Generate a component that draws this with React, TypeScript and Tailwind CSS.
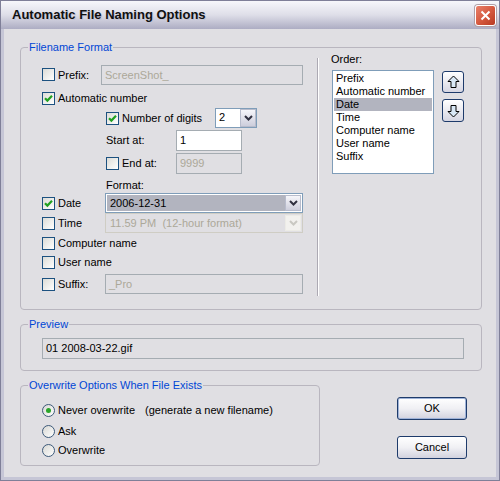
import React from "react";

function Check({ checked, className = "" }: { checked?: boolean; className?: string }) {
  return (
    <div
      className={`w-[13px] h-[13px] shrink-0 border border-[#1c5180] bg-linear-to-br from-[#dcdcd7] to-white flex items-center justify-center ${className}`}
    >
      {checked && (
        <svg width="9" height="9" viewBox="0 0 9 9">
          <path d="M1 4.2 L3.4 6.6 L8 1.8" stroke="#21a121" strokeWidth="2.2" fill="none" />
        </svg>
      )}
    </div>
  );
}

function Radio({ checked }: { checked?: boolean }) {
  return (
    <div className="w-[13px] h-[13px] shrink-0 rounded-full border border-[#3d5a7a] bg-linear-to-br from-[#d8d8d4] to-white flex items-center justify-center">
      {checked && <div className="w-[5px] h-[5px] rounded-full bg-[#2aa52a]" />}
    </div>
  );
}

function Edit({
  value,
  disabled,
  className = "",
}: {
  value: string;
  disabled?: boolean;
  className?: string;
}) {
  return (
    <div
      className={`border border-[#a5acb2] flex items-center pl-[3px] shrink-0 ${
        disabled ? "bg-[#e0dfe3] text-[#aca899]" : "bg-white text-black"
      } ${className}`}
    >
      {value}
    </div>
  );
}

function DropBtn({ disabled }: { disabled?: boolean }) {
  return (
    <div
      className={`w-[16px] h-full shrink-0 border flex items-center justify-center ${
        disabled
          ? "border-[#ecebe6] bg-[#f2f1ee]"
          : "border-[#b8bccc] bg-linear-to-b from-[#f6f6fa] to-[#cdcedc]"
      }`}
    >
      <svg width="9" height="6" viewBox="0 0 9 6">
        <path
          d="M1 1 L4.5 4.5 L8 1"
          stroke={disabled ? "#c9c8c2" : "#303040"}
          strokeWidth="2"
          fill="none"
        />
      </svg>
    </div>
  );
}

function Group({
  title,
  className = "",
  children,
}: {
  title: string;
  className?: string;
  children?: React.ReactNode;
}) {
  return (
    <div className={`relative border border-[#b9b6bf] rounded-[4px] shrink-0 ${className}`}>
      <span className="absolute left-[7px] top-[-8px] px-[1px] bg-[#e0dfe3] text-[#0046d5] leading-[14px] whitespace-nowrap">
        {title}
      </span>
      {children}
    </div>
  );
}

function ArrowBtn({ up, className = "" }: { up?: boolean; className?: string }) {
  return (
    <div
      className={`w-[22px] border border-[#1e3b6b] rounded-[3px] bg-linear-to-b from-white to-[#d6d6e2] flex items-center justify-center ${className}`}
    >
      <svg width="13" height="14" viewBox="0 0 13 14" className={up ? "" : "rotate-180"}>
        <path
          d="M6.5 1 L12 6.5 L9 6.5 L9 12.5 L4 12.5 L4 6.5 L1 6.5 Z"
          fill="#d9e8f6"
          stroke="#000"
          strokeWidth="1"
          strokeLinejoin="miter"
        />
      </svg>
    </div>
  );
}

function PushBtn({ label, def, className = "" }: { label: string; def?: boolean; className?: string }) {
  return (
    <div
      className={`w-[70px] h-[23px] rounded-[3px] border border-[#1e3b6b] bg-linear-to-b from-white via-[#f0f0f4] to-[#d2d2de] flex items-center justify-center ${
        def ? "shadow-[inset_0_0_0_1px_#9fb3d8]" : ""
      } ${className}`}
    >
      {label}
    </div>
  );
}

export default function App() {
  return (
    <div className="w-[500px] h-[481px] flex flex-col bg-[#c6c6d6] border border-[#7f7f98] overflow-hidden font-['Liberation_Sans',Arial,sans-serif] text-[11px] text-black">
      {/* Title bar */}
      <div className="h-[28px] shrink-0 flex items-center bg-linear-to-b from-[#f7f7fb] via-[#dedee8] to-[#adadc3] pl-[11px] pr-[3px]">
        <span className="font-bold text-[13px] text-[#101010] [text-shadow:1px_1px_0_#c4c4d4]">
          Automatic File Naming Options
        </span>
        <div className="ml-auto w-[21px] h-[21px] rounded-[3px] border border-white bg-linear-to-br from-[#e8806a] via-[#d65a40] to-[#b83a22] flex items-center justify-center shadow-[0_0_0_1px_#b0a0a8]">
          <svg width="11" height="11" viewBox="0 0 11 11">
            <path d="M1.5 1.5 L9.5 9.5 M9.5 1.5 L1.5 9.5" stroke="white" strokeWidth="2" />
          </svg>
        </div>
      </div>

      {/* Client */}
      <div className="flex-1 mx-[3px] mb-[3px] bg-[#e0dfe3] pl-[16px] pt-[18px] flex flex-col">
        {/* Filename Format */}
        <Group title="Filename Format" className="w-[462px] h-[263px] flex">
          {/* left column */}
          <div className="w-[296px] pl-[21px] pt-[17px] flex flex-col">
            {/* Prefix */}
            <div className="h-[20px] flex items-center">
              <Check className="mb-[2px]" />
              <span className="ml-[3px] w-[43px]">Prefix:</span>
              <Edit value="ScreenShot_" disabled className="w-[202px] h-[20px]" />
            </div>
            {/* Automatic number */}
            <div className="mt-[4px] h-[19px] flex items-center">
              <Check checked />
              <span className="ml-[3px]">Automatic number</span>
            </div>
            {/* Number of digits */}
            <div className="h-[21px] flex items-center pl-[64px]">
              <Check checked />
              <span className="ml-[3px] w-[93px]">Number of digits</span>
              <div className="w-[42px] h-[20px] mb-[2px] border border-[#7f9db9] bg-white flex">
                <span className="flex-1 pl-[3px] flex items-center">2</span>
                <DropBtn />
              </div>
            </div>
            {/* Start at */}
            <div className="mt-[1px] h-[21px] flex items-center pl-[64px]">
              <span className="w-[70px]">Start at:</span>
              <Edit value="1" className="w-[66px] h-[21px]" />
            </div>
            {/* End at */}
            <div className="mt-[2px] h-[21px] flex items-center pl-[64px]">
              <Check />
              <span className="ml-[3px] w-[54px]">End at:</span>
              <Edit value="9999" disabled className="w-[66px] h-[21px]" />
            </div>
            {/* Format label */}
            <div className="mt-[4px] h-[15px] flex items-center pl-[64px]">Format:</div>
            {/* Date */}
            <div className="h-[20px] flex items-center">
              <Check checked />
              <span className="ml-[3px] w-[47px]">Date</span>
              <div className="w-[198px] h-[20px] border border-[#7f9db9] bg-white p-[1px] flex">
                <span className="flex-1 bg-[#b2b4bf] pl-[3px] flex items-center">2006-12-31</span>
                <DropBtn />
              </div>
            </div>
            {/* Time */}
            <div className="h-[20px] flex items-center">
              <Check />
              <span className="ml-[3px] w-[47px]">Time</span>
              <div className="w-[198px] h-[20px] border border-[#cfcdc4] bg-[#e0dfe3] p-[1px] flex">
                <span className="flex-1 pl-[3px] flex items-center text-[#aca899] whitespace-pre">
                  11.59 PM  (12-hour format)
                </span>
                <DropBtn disabled />
              </div>
            </div>
            {/* Computer name */}
            <div className="mt-[1px] h-[19px] flex items-center">
              <Check />
              <span className="ml-[3px]">Computer name</span>
            </div>
            {/* User name */}
            <div className="h-[19px] flex items-center">
              <Check />
              <span className="ml-[3px]">User name</span>
            </div>
            {/* Suffix */}
            <div className="mt-[2px] h-[20px] flex items-center">
              <Check />
              <span className="ml-[3px] w-[47px]">Suffix:</span>
              <Edit value="_Pro" disabled className="w-[198px] h-[20px]" />
            </div>
          </div>

          {/* separator */}
          <div className="mt-[10px] h-[238px] w-[2px] border-l border-[#aca9b3] bg-white shrink-0" />

          {/* right column */}
          <div className="flex-1 pl-[12px] pt-[4px] flex flex-col">
            <div className="h-[14px] flex items-center">Order:</div>
            <div className="mt-[4px] flex">
              <div className="ml-[1px] w-[102px] h-[104px] border border-[#7f9db9] bg-white pt-[1px] pl-[1px] pr-[1px] flex flex-col">
                {["Prefix", "Automatic number", "Date", "Time", "Computer name", "User name", "Suffix"].map(
                  (it) => (
                    <div
                      key={it}
                      className={`h-[13px] leading-[13px] pl-[2px] whitespace-nowrap ${
                        it === "Date" ? "bg-[#b2b4bf]" : ""
                      }`}
                    >
                      {it}
                    </div>
                  )
                )}
              </div>
              <div className="ml-[8px] flex flex-col">
                <ArrowBtn up className="mt-[1px] h-[22px]" />
                <ArrowBtn className="mt-[6px] h-[23px]" />
              </div>
            </div>
          </div>
        </Group>

        {/* Preview */}
        <Group title="Preview" className="mt-[14px] w-[462px] h-[47px] pl-[21px] pt-[13px]">
          <Edit value="01 2008-03-22.gif" className="w-[422px] h-[21px] !bg-[#e0dfe3]" />
        </Group>

        {/* Bottom */}
        <div className="mt-[14px] flex">
          <Group title="Overwrite Options When File Exists" className="w-[300px] h-[81px] pl-[21px] pt-[17px] flex flex-col">
            <div className="h-[15px] flex items-center">
              <Radio checked />
              <span className="ml-[3px]">Never overwrite</span>
              <span className="ml-[10px]">(generate a new filename)</span>
            </div>
            <div className="mt-[6px] h-[15px] flex items-center">
              <Radio />
              <span className="ml-[3px]">Ask</span>
            </div>
            <div className="mt-[4px] h-[15px] flex items-center">
              <Radio />
              <span className="ml-[3px]">Overwrite</span>
            </div>
          </Group>
          <div className="ml-[77px] pt-[12px] flex flex-col">
            <PushBtn label="OK" def />
            <PushBtn label="Cancel" className="mt-[16px]" />
          </div>
        </div>
      </div>
    </div>
  );
}
